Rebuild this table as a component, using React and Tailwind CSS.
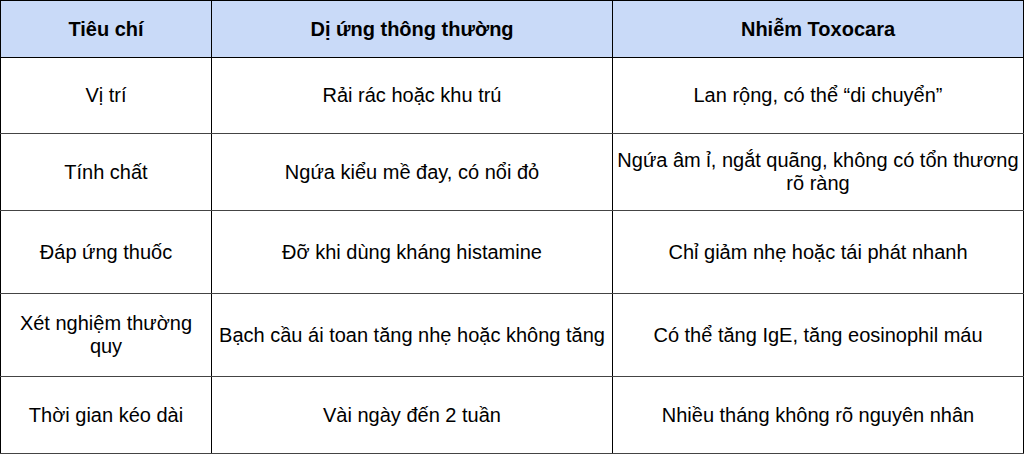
const rows = [
  { h: 'h-[76px]', cells: ['Vị trí', 'Rải rác hoặc khu trú', 'Lan rộng, có thể “di chuyển”'] },
  { h: 'h-[77px]', cells: ['Tính chất', 'Ngứa kiểu mề đay, có nổi đỏ', 'Ngứa âm ỉ, ngắt quãng, không có tổn thương rõ ràng'] },
  { h: 'h-[83px]', cells: ['Đáp ứng thuốc', 'Đỡ khi dùng kháng histamine', 'Chỉ giảm nhẹ hoặc tái phát nhanh'] },
  { h: 'h-[83px]', cells: ['Xét nghiệm thường quy', 'Bạch cầu ái toan tăng nhẹ hoặc không tăng', 'Có thể tăng IgE, tăng eosinophil máu'] },
  { h: 'h-[77px]', cells: ['Thời gian kéo dài', 'Vài ngày đến 2 tuần', 'Nhiều tháng không rõ nguyên nhân'] },
]

export default function App() {
  return (
    <div className="w-[1024px] h-[457px] bg-white font-['Liberation_Sans',Arial,sans-serif] text-[20px] leading-[23px] text-black">
      <table className="border-collapse table-fixed w-[1023px]">
        <colgroup>
          <col className="w-[211px]" />
          <col className="w-[401px]" />
          <col className="w-[411px]" />
        </colgroup>
        <thead>
          <tr className="h-[57px] bg-[#c9daf8]">
            <th className="border border-black font-bold px-1">Tiêu chí</th>
            <th className="border border-black font-bold px-1">Dị ứng thông thường</th>
            <th className="border border-black font-bold px-1">Nhiễm Toxocara</th>
          </tr>
        </thead>
        <tbody>
          {rows.map((r, i) => (
            <tr key={i} className={r.h}>
              {r.cells.map((c, j) => (
                <td key={j} className="border-x border-x-black border-y border-y-[#444] text-center align-middle px-1">
                  {c}
                </td>
              ))}
            </tr>
          ))}
        </tbody>
      </table>
    </div>
  )
}
